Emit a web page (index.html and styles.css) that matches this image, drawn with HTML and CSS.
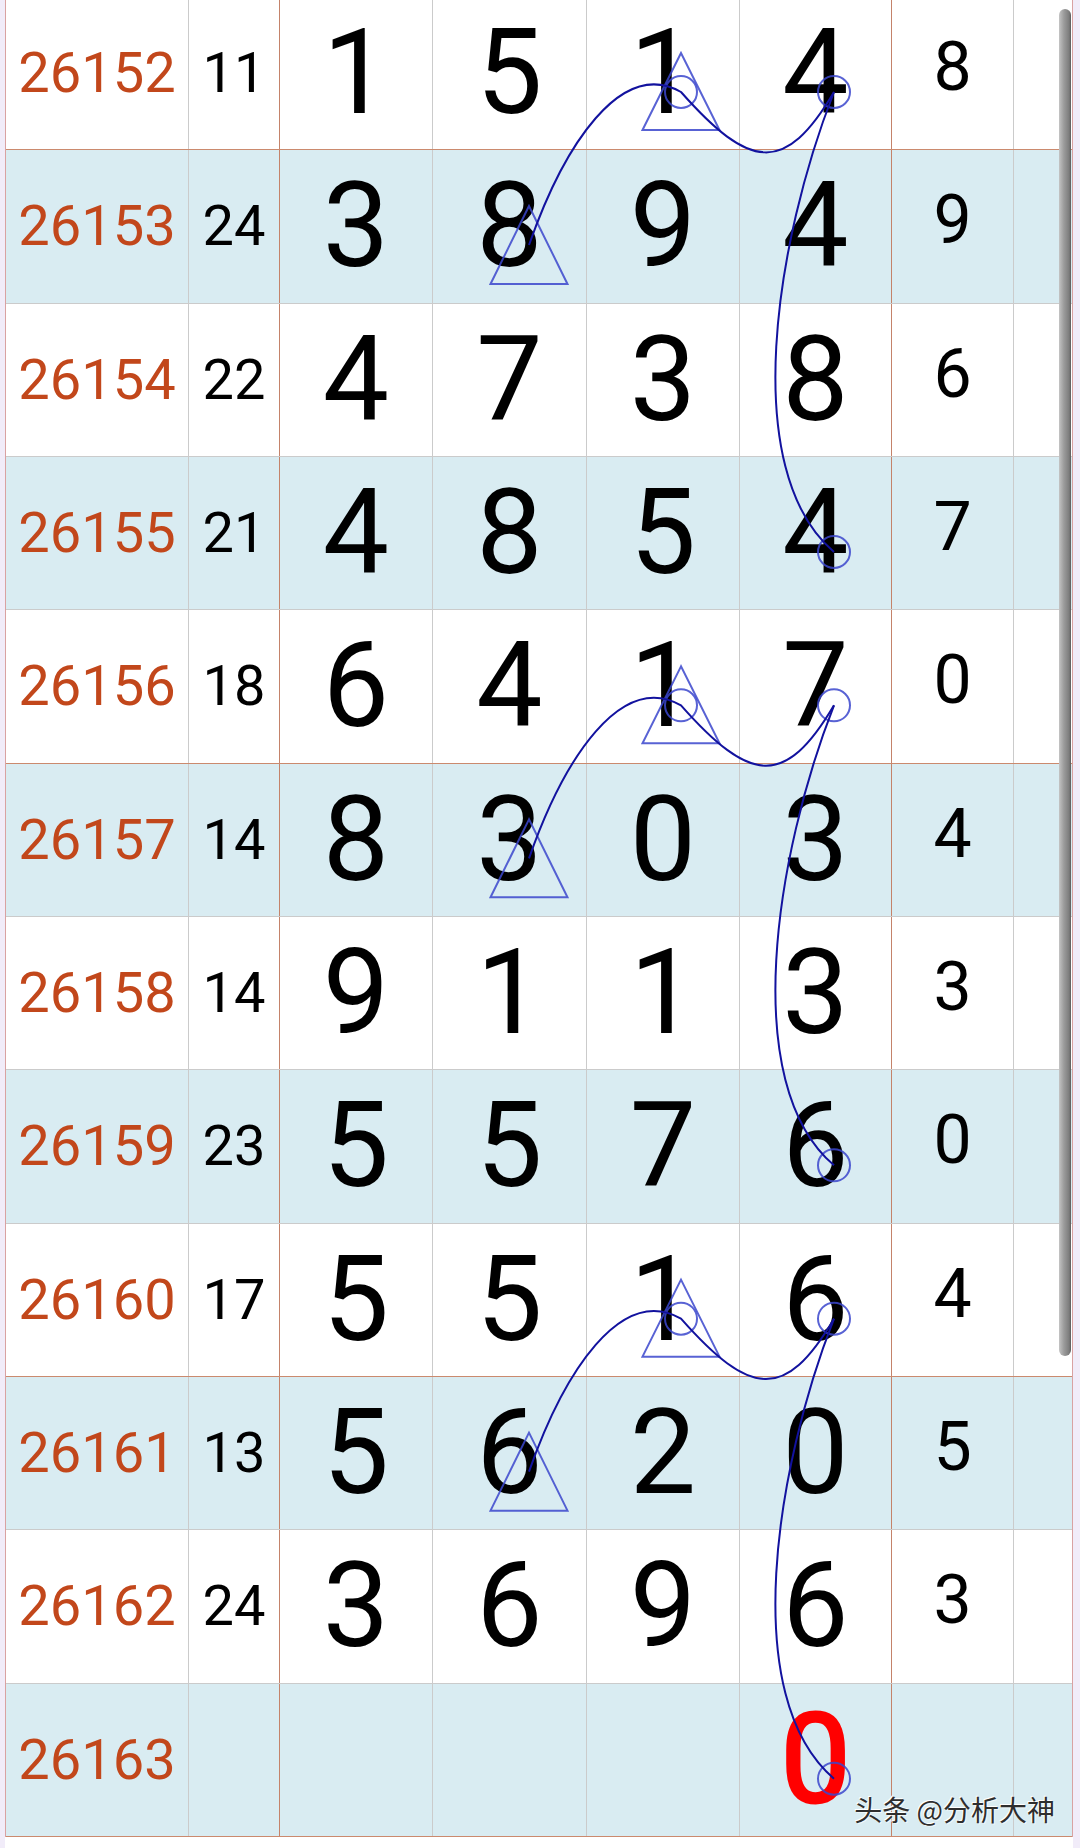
FILE: index.html
```html
<!DOCTYPE html>
<html lang="zh">
<head>
  <meta charset="UTF-8">
  <meta name="viewport" content="width=device-width, initial-scale=1.0">
  <title>走势图</title>
  <link rel="stylesheet" href="styles.css">
</head>
<body>

<div class="screen">
  <div class="edge"></div>

  <!-- Chart -->
  <div class="chart">
    <div class="row group-end">
      <div class="cell issue">26152</div><div class="cell sum sep-r">11</div>
      <div class="cell ball">1</div><div class="cell ball">5</div><div class="cell ball">1</div><div class="cell ball sep-r">4</div>
      <div class="cell tail">8</div><div class="cell"></div>
    </div>
    <div class="row alt">
      <div class="cell issue">26153</div><div class="cell sum sep-r">24</div>
      <div class="cell ball">3</div><div class="cell ball">8</div><div class="cell ball">9</div><div class="cell ball sep-r">4</div>
      <div class="cell tail">9</div><div class="cell"></div>
    </div>
    <div class="row">
      <div class="cell issue">26154</div><div class="cell sum sep-r">22</div>
      <div class="cell ball">4</div><div class="cell ball">7</div><div class="cell ball">3</div><div class="cell ball sep-r">8</div>
      <div class="cell tail">6</div><div class="cell"></div>
    </div>
    <div class="row alt">
      <div class="cell issue">26155</div><div class="cell sum sep-r">21</div>
      <div class="cell ball">4</div><div class="cell ball">8</div><div class="cell ball">5</div><div class="cell ball sep-r">4</div>
      <div class="cell tail">7</div><div class="cell"></div>
    </div>
    <div class="row group-end">
      <div class="cell issue">26156</div><div class="cell sum sep-r">18</div>
      <div class="cell ball">6</div><div class="cell ball">4</div><div class="cell ball">1</div><div class="cell ball sep-r">7</div>
      <div class="cell tail">0</div><div class="cell"></div>
    </div>
    <div class="row alt">
      <div class="cell issue">26157</div><div class="cell sum sep-r">14</div>
      <div class="cell ball">8</div><div class="cell ball">3</div><div class="cell ball">0</div><div class="cell ball sep-r">3</div>
      <div class="cell tail">4</div><div class="cell"></div>
    </div>
    <div class="row">
      <div class="cell issue">26158</div><div class="cell sum sep-r">14</div>
      <div class="cell ball">9</div><div class="cell ball">1</div><div class="cell ball">1</div><div class="cell ball sep-r">3</div>
      <div class="cell tail">3</div><div class="cell"></div>
    </div>
    <div class="row alt">
      <div class="cell issue">26159</div><div class="cell sum sep-r">23</div>
      <div class="cell ball">5</div><div class="cell ball">5</div><div class="cell ball">7</div><div class="cell ball sep-r">6</div>
      <div class="cell tail">0</div><div class="cell"></div>
    </div>
    <div class="row group-end">
      <div class="cell issue">26160</div><div class="cell sum sep-r">17</div>
      <div class="cell ball">5</div><div class="cell ball">5</div><div class="cell ball">1</div><div class="cell ball sep-r">6</div>
      <div class="cell tail">4</div><div class="cell"></div>
    </div>
    <div class="row alt">
      <div class="cell issue">26161</div><div class="cell sum sep-r">13</div>
      <div class="cell ball">5</div><div class="cell ball">6</div><div class="cell ball">2</div><div class="cell ball sep-r">0</div>
      <div class="cell tail">5</div><div class="cell"></div>
    </div>
    <div class="row">
      <div class="cell issue">26162</div><div class="cell sum sep-r">24</div>
      <div class="cell ball">3</div><div class="cell ball">6</div><div class="cell ball">9</div><div class="cell ball sep-r">6</div>
      <div class="cell tail">3</div><div class="cell"></div>
    </div>
    <div class="row alt group-end">
      <div class="cell issue">26163</div><div class="cell sum sep-r"></div>
      <div class="cell ball"></div><div class="cell ball"></div><div class="cell ball"></div><div class="cell ball hit sep-r">0</div>
      <div class="cell tail"></div><div class="cell"></div>
    </div>
  </div>

  <div class="edge edge-right"></div>

  <!-- Hand-drawn marks over the chart -->
  <svg class="marks" width="1080" height="1848" viewBox="0 0 1080 1848">
    <defs>
      <g id="swing">
        <polygon class="shape" points="681,53 642.5,130 719.5,130"/>
        <polygon class="shape" points="529,206 490.5,284 567.5,284"/>
        <circle class="shape" cx="681" cy="92" r="16"/>
        <circle class="shape" cx="834" cy="92" r="16"/>
        <circle class="shape" cx="834" cy="552" r="16"/>
        <path class="line" d="M529,245 C564,145 621,58 681,92 C750,170 785,175 834,92"/>
        <path class="line" d="M834,92 C776,240 738,470 834,552"/>
      </g>
    </defs>
    <use href="#swing"/>
    <use href="#swing" transform="translate(0,613.33)"/>
    <use href="#swing" transform="translate(0,1226.67)"/>
  </svg>

  <div class="scrollbar"></div>
  <div class="watermark">头条 @分析大神</div>
</div>

</body>
</html>
```

FILE: styles.css
```css
body {
  margin: 0;
  padding: 0;
  background-color: #fff;
  font-family: Roboto, "Noto Sans", sans-serif;
}

.screen {
  position: relative;
  display: flex;
  align-items: flex-start;
  width: 1080px;
  height: 1848px;
  overflow: hidden;
  background-color: #fff;
}

.edge {
  width: 5px;
  height: 100%;
  background-color: #f1ecf9;
}

.edge-right {
  width: 7px;
}

.chart {
  width: 1068px;
  margin-top: -3px;
  box-sizing: border-box;
  border-left: 1px solid #d9a2a2;
  border-right: 1px solid #d9a2a2;
}

.row {
  display: grid;
  grid-template-columns: 183px 91px 153px 154px 153px 152px 122px 58px;
  height: 153.33px;
  box-sizing: border-box;
  border-bottom: 1px solid #cbcbcb;
  background-color: #fff;
}

.row.alt {
  background-color: #d9ecf2;
}

.row.group-end {
  border-bottom-color: #cb8a6e;
}

.cell {
  display: flex;
  align-items: center;
  justify-content: center;
  box-sizing: border-box;
  border-right: 1px solid #cbcbcb;
  color: #000;
}

.cell:last-child {
  border-right: none;
}

.cell.sep-r {
  border-right-color: #c4836a;
}

.issue {
  font-size: 56px;
  color: #c2471b;
}

.sum {
  font-size: 56px;
}

.ball {
  font-size: 118px;
}

.tail {
  font-size: 68px;
  padding-bottom: 12px;
}

.hit {
  font-size: 124px;
  color: #ff0000;
  -webkit-text-stroke: 3px #ff0000;
}

.marks {
  position: absolute;
  top: 0;
  left: 0;
  pointer-events: none;
}

.marks .shape {
  fill: none;
  stroke: #3b46cc;
  stroke-width: 2;
  opacity: 0.85;
}

.marks .line {
  fill: none;
  stroke: #12129e;
  stroke-width: 2;
}

.scrollbar {
  position: absolute;
  top: 9px;
  left: 1059px;
  width: 12px;
  height: 1347px;
  border-radius: 6px;
  background: linear-gradient(to right, #c4c4c4, #9c9c9c 40%, #7c7c7c 85%, #5a5a5a);
}

.watermark {
  position: absolute;
  top: 1795px;
  right: 25px;
  font-family: "Noto Sans CJK SC", sans-serif;
  font-size: 28px;
  line-height: 1;
  color: #2e2e2e;
  text-shadow: -1px -1px 0 #fff, 1px 1px 0 rgba(255, 255, 255, 0.6);
  white-space: nowrap;
}
```
